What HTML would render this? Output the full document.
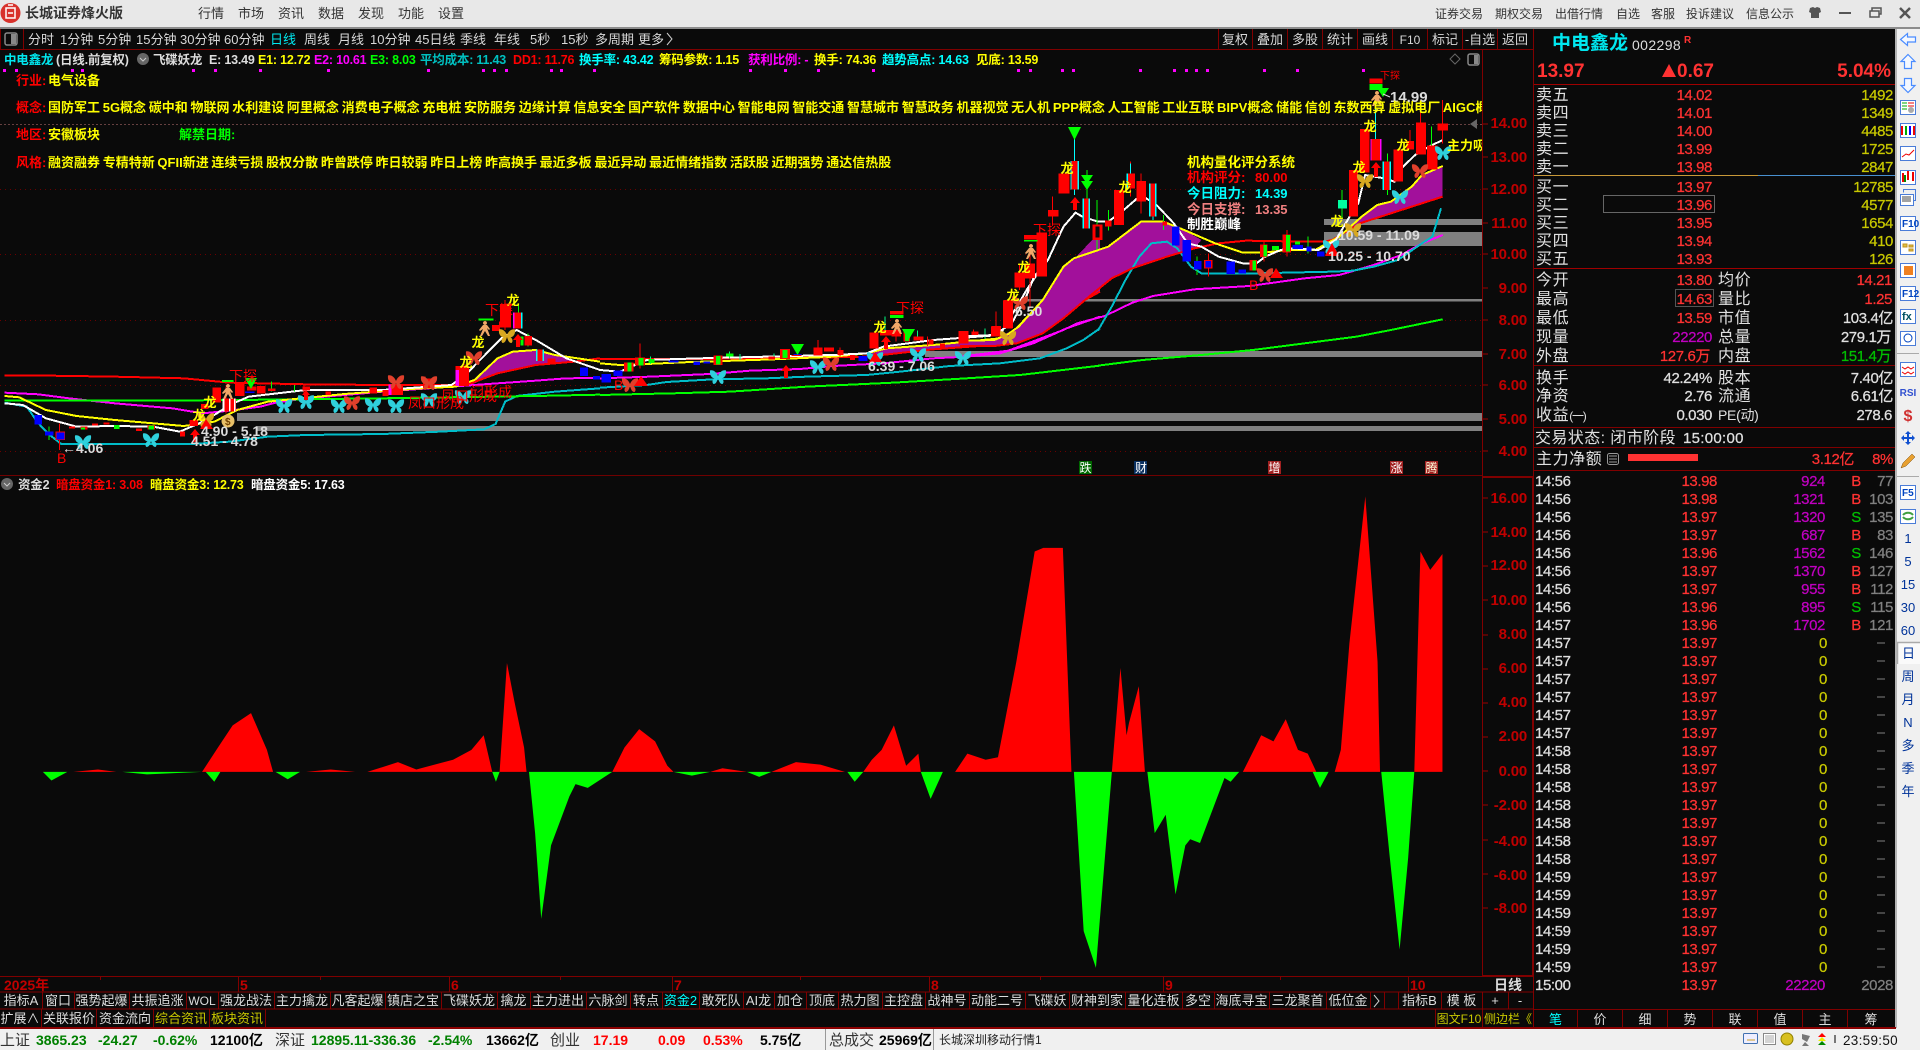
<!DOCTYPE html>
<html lang="zh"><head><meta charset="utf-8"><title>长城证券烽火版</title>
<style>
html,body{margin:0;padding:0;background:#0a0a0a;width:1920px;height:1050px;overflow:hidden}
svg{display:block}
text{font-family:"Liberation Sans","WenQuanYi Zen Hei","Noto Sans CJK SC",sans-serif;white-space:pre}
.e{text-anchor:end}.c{text-anchor:middle}
.n{font-size:15px;letter-spacing:-.4px;stroke-width:.25px}
.w{fill:#e0e0e0;stroke:#e0e0e0}.r{fill:#ff3232;stroke:#ff3232}.y{fill:#c8c800;stroke:#c8c800}.m{fill:#c000c0;stroke:#c000c0}.g{fill:#808080;stroke:#808080}.s{fill:#00c000;stroke:#00c000}
.l{font-size:16px;fill:#e0e0e0;letter-spacing:.6px}
.t{font-size:12px;fill:#333}
.b{font-size:13px;fill:#d8d8d8}
.k{font-size:13px;fill:#ddd}
.i{font-size:12.500px;font-weight:bold;letter-spacing:-.2px}
.a{font-size:15px;font-weight:bold;fill:#c00000;text-anchor:end;letter-spacing:-.2px}
.c1{font-size:13px;font-weight:bold;fill:#ff0;word-spacing:-.9px}
.c2{font-size:13px;font-weight:bold;fill:#f00}
.d{font-size:14px;font-weight:bold;fill:#dcdcdc}
.lg{font-size:13px;font-weight:bold;fill:#ff0;text-anchor:middle}
.tx{font-size:14px;fill:#f00;}
.st{font-size:14px;font-weight:bold}
.sb{font-size:13px;fill:#003399;text-anchor:middle}
.v{vector-effect:non-scaling-stroke;fill:none}
</style></head><body>
<svg width="1920" height="1050" viewBox="0 0 1920 1050" xmlns="http://www.w3.org/2000/svg">
<defs>
<symbol id="bf" viewBox="0 0 16 14" overflow="visible"><path d="M8 6C6.500 2 3 -.5 0 .5c-.5 4 1 7 4.500 8C2 9.500 2 13 3.500 14c2.500 0 3.500-2.500 4.500-6 1 3.500 2 6 4.500 6 1.500-1 1.500-4.500-1-5.500C15 7.500 16.500 4.500 16 .5 13-.5 9.500 2 8 6z"/></symbol>
<symbol id="pr" viewBox="0 0 14 16" overflow="visible"><path d="M7 0a2 2 0 1 1-.01 0zM5 4h4l3 4-1 1-2-2 3 8h-2l-3-5-3 5H2l3-7-3 2-1-1z" fill="#f0a868"/></symbol>
<clipPath id="cm"><rect x="0" y="50" width="1482" height="426"/></clipPath>
</defs>

<!-- backgrounds -->
<rect width="1920" height="1050" fill="#0a0a0a"/>
<rect width="1920" height="28" fill="#e8e8e8"/>
<rect y="27" width="1920" height="2" fill="#8c8c8c"/>
<rect x="1895" y="29" width="25" height="1000" fill="#f0f0f0"/>
<rect x="1895" y="29" width="2" height="1000" fill="#b4b4b4"/>
<rect y="1028" width="1920" height="22" fill="#f0f0f0"/>
<rect y="1027" width="1896" height="2" fill="#8a0000"/>

<!-- title bar -->
<circle cx="10.500" cy="13" r="10" fill="#d8322c"/><rect x="6" y="8" width="9" height="10" fill="none" stroke="#fff" stroke-width="1.500"/><path d="M8 5h5M8 13h5" stroke="#fff" stroke-width="1.500"/>
<text x="25" y="18" font-size="14" font-weight="bold" fill="#333">长城证券烽火版</text>
<g class="b">
<text class="b" x="198" y="18" style="fill:#333">行情</text><text class="b" x="238" y="18" style="fill:#333">市场</text><text class="b" x="278" y="18" style="fill:#333">资讯</text><text class="b" x="318" y="18" style="fill:#333">数据</text><text class="b" x="358" y="18" style="fill:#333">发现</text><text class="b" x="398" y="18" style="fill:#333">功能</text><text class="b" x="438" y="18" style="fill:#333">设置</text>
</g>
<text class="t" x="1435" y="18">证券交易</text><text class="t" x="1495" y="18">期权交易</text><text class="t" x="1555" y="18">出借行情</text><text class="t" x="1616" y="18">自选</text><text class="t" x="1651" y="18">客服</text><text class="t" x="1686" y="18">投诉建议</text><text class="t" x="1746" y="18">信息公示</text>
<path d="M1810 8l3-1 2 1 2-1 3 1 1 4-2 1v5h-8v-5l-2-1z" fill="#555"/>
<rect x="1839" y="12" width="12" height="2" fill="#555"/>
<path d="M1870 11h9v6h-9zM1872 11V8h9v6h-2" fill="none" stroke="#555" stroke-width="1.500"/>
<path d="M1900 8l10 10M1910 8l-10 10" stroke="#555" stroke-width="2.500"/>

<!-- period toolbar -->
<rect x="0" y="49" width="1533" height="1" fill="#800000"/>
<path d="M.5 29v20M23.500 29v20" stroke="#800000"/>
<rect x="5" y="33" width="12" height="12" rx="2" fill="none" stroke="#888" stroke-width="1.500"/><rect x="11" y="34" width="5" height="10" fill="#888"/>
<g class="b">
<text class="b" x="28" y="44">分时</text><text class="b" x="60" y="44">1分钟</text><text class="b" x="98" y="44">5分钟</text><text class="b" x="136" y="44">15分钟</text><text class="b" x="180" y="44">30分钟</text><text class="b" x="224" y="44">60分钟</text><text class="b" x="270" y="44" style="fill:#00e8f0">日线</text><text class="b" x="304" y="44">周线</text><text class="b" x="338" y="44">月线</text><text class="b" x="370" y="44">10分钟</text><text class="b" x="415" y="44">45日线</text><text class="b" x="460" y="44">季线</text><text class="b" x="494" y="44">年线</text><text class="b" x="530" y="44">5秒</text><text class="b" x="561" y="44">15秒</text><text class="b" x="595" y="44">多周期</text><text class="b" x="638" y="44">更多</text>
</g>
<path d="M667 33l5 6-5 6" fill="none" stroke="#ccc"/>
<path d="M1218.500 29v20M1252.500 29v20M1287.500 29v20M1322.500 29v20M1357.500 29v20M1392.500 29v20M1427.500 29v20M1462.500 29v20M1497.500 29v20" stroke="#800000"/>
<g><text class="b c" x="1235" y="44">复权</text><text class="b c" x="1270" y="44">叠加</text><text class="b c" x="1305" y="44">多股</text><text class="b c" x="1340" y="44">统计</text><text class="b c" x="1375" y="44">画线</text><text class="b c" x="1410" y="44" style="font-size:12px">F10</text><text class="b c" x="1445" y="44">标记</text><text class="b c" x="1480" y="44">-自选</text><text class="b c" x="1515" y="44">返回</text></g>

<!-- info line -->
<g class="i">
<text class="i" x="4" y="64" style="fill:#00e8f0">中电鑫龙</text><text class="i" x="56" y="64" style="fill:#ddd">(日线.前复权)</text>
<circle cx="143" cy="59" r="6" fill="#666"/><path d="M140 58l3 3 3-3" stroke="#ccc" fill="none"/>
<text class="i" x="153" y="64" style="fill:#ddd">飞碟妖龙</text>
<text class="i" x="209" y="64" style="fill:#ddd">E: 13.49</text>
<text class="i" x="258" y="64" style="fill:#ff0">E1: 12.72</text>
<text class="i" x="314" y="64" style="fill:#f0f">E2: 10.61</text>
<text class="i" x="370" y="64" style="fill:#0f0">E3: 8.03</text>
<text class="i" x="420" y="64" style="fill:#00c0c0">平均成本: 11.43</text>
<text class="i" x="513" y="64" style="fill:#f00">DD1: 11.76</text>
<text class="i" x="579" y="64" style="fill:#0ff">换手率: 43.42</text>
<text class="i" x="659" y="64" style="fill:#ff0">筹码参数: 1.15</text>
<text class="i" x="748" y="64" style="fill:#f0f">获利比例: -</text>
<text class="i" x="814" y="64" style="fill:#ff0">换手: 74.36</text>
<text class="i" x="882" y="64" style="fill:#0ff">趋势高点: 14.63</text>
<text class="i" x="976" y="64" style="fill:#ff0">见底: 13.59</text>
</g>
<path d="M1455 54l5 5-5 5-5-5z" fill="none" stroke="#666"/>
<rect x="1468" y="54" width="11" height="11" rx="2" fill="none" stroke="#888" stroke-width="1.500"/><rect x="1474" y="55" width="4" height="9" fill="#888"/>
<path fill="#f0f" d="M3 69h3v3H3zM15 69h3v3h-3zM71 69h3v3h-3zM81 69h3v3h-3zM192 69h3v3h-3zM214 69h3v3h-3zM259 69h3v3h-3zM327 69h3v3h-3zM427 69h3v3h-3zM482 69h3v3h-3zM493 69h3v3h-3zM505 69h3v3h-3zM550 69h3v3h-3zM560 69h3v3h-3zM593 69h3v3h-3zM749 69h3v3h-3zM784 69h3v3h-3zM817 69h3v3h-3zM872 69h3v3h-3zM1017 69h3v3h-3zM1029 69h3v3h-3zM1061 69h3v3h-3zM1072 69h3v3h-3zM1139 69h3v3h-3zM1173 69h3v3h-3zM1185 69h3v3h-3zM1195 69h3v3h-3zM1206 69h3v3h-3zM1263 69h3v3h-3zM1296 69h3v3h-3zM1362 69h3v3h-3z"/>

<!-- main chart -->
<g clip-path="url(#cm)" shape-rendering="crispEdges">
<path d="M0 189.500H1482M0 254.500H1482M0 320.500H1482M0 385.500H1482M0 451.500H1482" stroke="#6a0000" stroke-dasharray="1 4"/>
<path d="M0 124.500H1482" stroke="#664040" stroke-dasharray="2 2"/>
<!-- gray bands -->
<g fill="#808080">
<rect x="1324" y="219" width="158" height="6"/><rect x="1324" y="232" width="158" height="14"/>
<rect x="1022" y="299" width="460" height="2.500"/><rect x="925" y="351" width="557" height="6"/>
<rect x="237" y="413" width="1245" height="8"/><rect x="256" y="426" width="1226" height="5"/>
</g>
</g>

<g clip-path="url(#cm)" shape-rendering="crispEdges">
<!-- z9 group: left -->
<g transform="translate(0,290) scale(.3827,.3333)">
<path fill="#a2109b" d="M1230 285L1300 205 1340 185 1400 180 1450 195 1500 210 1500 215 1400 225 1300 250z"/>
<polyline class="v" stroke="#f0f" stroke-width="2" points="12,308 100,313 180,325 300,340 450,355 530,370 600,362 680,350 720,338 800,325 1000,305 1180,290 1300,280 1400,272 1480,265 1568,264"/>
<polyline class="v" stroke="#00bcc8" stroke-width="2" points="12,338 70,350 100,400 130,435 160,462 300,462 500,462 600,455 700,440 800,435 1000,432 1150,425 1265,418 1295,402 1320,335 1350,318 1450,305 1568,295"/>
<polyline class="v" stroke="#0f0" stroke-width="2" points="12,332 400,332 620,330 1000,325 1400,318 1568,314"/>
<polyline class="v" stroke="#f00" stroke-width="2" points="12,256 130,257 300,260 480,265 600,278 800,283 1000,285 1190,285 1230,280 1300,250 1400,225 1500,215 1568,205"/>
<polyline class="v" stroke="#ff0" stroke-width="2" points="12,318 50,322 120,360 200,378 300,390 400,400 480,408 560,395 620,360 700,335 900,312 1100,295 1190,290 1240,270 1300,205 1340,185 1400,180 1450,195 1568,215"/>
<polyline class="v" stroke="#fff" stroke-width="2" points="12,340 60,345 120,385 200,410 300,408 400,410 470,425 540,390 600,345 650,320 800,300 1000,300 1180,285 1220,250 1310,145 1350,120 1400,150 1480,205 1568,240"/>
<path class="v" stroke="#f00" d="M155 400V480M795 285V315M1305 95V130M1320 30V120M1110 260V300M1215 222V290M590 290V370"/>
<path class="v" stroke="#0f0" d="M128 410V450M1355 40V70M1380 130V170M710 275V305M770 285V305"/>
<path fill="#f00" d="M145 425h25v25h-25zM180 410h16v6h-16zM210 410h18v8h-18zM240 400h16v6h-16zM270 398h16v6h-16zM355 415h16v8h-16zM385 405h20v14h-20zM470 425h14v14h-14zM495 390h22v18h-22zM525 342h20v15h-20zM555 292h22v46h-22zM582 325h35v40h-35zM614 280h25v38h-25zM645 290h25v12h-25zM672 288h22v22h-22zM700 295h20v8h-20zM790 290h20v12h-20zM850 305h15v10h-15zM965 292h20v18h-20zM1000 300h15v18h-15zM1015 283h38v32h-38zM1105 265h30v30h-30zM1190 228h36v60h-36zM1285 105h20v18h-20zM1307 42h28v70h-28zM1340 68h25v48h-25zM1370 138h20v28h-20zM1400 178h22v35h-22zM1430 205h22v15h-22z"/>
<path fill="#00f" d="M90 375h20v28H90zM118 425h22v12h-22zM148 428h20v20h-20zM1515 233h22v25h-22zM1550 258h18v10h-18zM640 304h25v5h-25z"/>
<path fill="#0f0" d="M298 405h14v12h-14zM388 406h14v12h-14zM580 270h30v6h-30zM1250 85h40v6h-40zM212 412h10v6h-10zM1360 140h8v26h-8z"/>
<path fill="#f0f" d="M1015 283h8v32h-8zM1190 240h10v48h-10zM1340 68h4v48h-4z"/>
<path fill="#fff" d="M582 325h4v40h-4zM598 325h4v40h-4zM612 325h4v40h-4z"/>
<path fill="#0ff" d="M1361 68h4v48h-4zM1400 178h4v35h-4zM1418 178h4v35h-4z"/>
</g>
<!-- z10 group: mid -->
<g transform="translate(600,260) scale(.3333,.3333)">
<path fill="#a2109b" d="M800 285L860 265 1000 255 1200 235 1240 215 1330 120 1420 0 1500 -85 1500 95 1400 150 1300 225 1250 250 1000 268 800 290z"/>
<polyline class="v" stroke="#f0f" stroke-width="2" points="0,355 150,350 330,342 450,332 600,327 700,318 850,310 1000,295 1100,290 1200,280 1300,250 1400,205 1500,170"/>
<polyline class="v" stroke="#00bcc8" stroke-width="2" points="0,383 140,375 200,366 340,358 500,355 620,350 800,345 900,335 1050,318 1200,310 1320,295 1400,265 1450,240 1500,205"/>
<polyline class="v" stroke="#0f0" stroke-width="2" points="0,405 220,400 390,395 620,380 880,368 1100,355 1260,345 1500,317"/>
<polyline class="v" stroke="#f00" stroke-width="2" points="0,297 300,297 700,292 800,290 1000,268 1250,250 1300,225 1400,150 1500,95"/>
<polyline class="v" stroke="#ff0" stroke-width="2" points="0,310 60,315 140,312 250,307 400,302 520,298 700,290 800,280 860,265 1000,255 1200,235 1240,215 1330,120 1420,0"/>
<polyline class="v" stroke="#fff" stroke-width="2" points="0,330 60,335 140,300 300,295 500,290 700,285 800,280 850,260 1000,240 1200,225 1280,90 1340,0"/>
<path class="v" stroke="#f00" d="M120 250V325M654 240V262M1188 155V198M1290 50V140M1120 208V230M888 230V245M720 262V290M982 230V258"/>
<path class="v" stroke="#00ff80" d="M152 290V312M420 282V300M388 275V295M1155 205V240M855 170V210M953 212V232M522 280V298"/>
<path fill="#f00" d="M72 307h28v28H72zM105 292h30v25h-30zM340 287h28v28h-28zM505 290h20v8h-20zM540 267h30v30h-30zM575 285h30v3h-30zM640 262h28v25h-28zM672 262h30v12h-30zM712 270h18v15h-18zM750 285h15v15h-15zM808 218h28v47h-28zM840 210h35v17h-35zM875 210h28v20h-28zM910 212h20v33h-20zM940 230h30v12h-30zM985 238h15v15h-15zM1020 250h15v15h-15zM1075 213h30v40h-30zM1115 215h20v12h-20zM1175 198h28v32h-28zM1210 120h28v85h-28zM1243 37h30v45h-30zM1275 10h30v45h-30zM1310 -20h30v70h-30zM870 153h40v11h-40z"/>
<path fill="#00f" d="M5 342h28v25H5zM40 332h28v16H40zM205 302h30v5h-30zM280 305h20v10h-20zM310 305h20v5h-20zM775 288h28v15h-28zM580 282h24v3h-24z"/>
<path fill="#0f0" d="M82 308h12v26H82zM115 294h15v22h-15zM145 297h18v12h-18zM348 288h14v26h-14zM378 280h22v10h-22zM548 270h14v24h-14zM870 165h40v9h-40zM915 215h12v28h-12z"/>
</g>
<!-- z8 group: right -->
<g transform="translate(960,60) scale(.3448,.3333)">
<path fill="#a2109b" d="M0 843L100 840 170 800 240 720 300 620 330 595 430 560 525 485 590 485 650 510 700 540 680 565 600 590 500 625 440 655 380 705 300 775 240 820 165 850 100 858 0 858z"/>
<path fill="#a2109b" d="M1100 530L1165 470 1210 435 1250 425 1310 380 1340 345 1400 318 1400 410 1250 460 1160 490z"/>
<polyline class="v" stroke="#f0f" stroke-width="2" points="0,890 80,880 140,872 210,845 300,810 340,790 420,768 500,728 560,708 680,688 840,678 1000,655 1100,645 1200,615 1280,585 1340,550 1400,525"/>
<polyline class="v" stroke="#00bcc8" stroke-width="2" points="400,812 440,740 480,660 520,590 555,550 600,545 630,565 670,620 700,640 860,640 1080,635 1140,632 1200,620 1270,600 1340,550 1370,530 1395,445"/>
<polyline class="v" stroke="#0f0" stroke-width="2" points="400,917 530,900 700,885 850,870 1000,850 1150,830 1250,810 1400,778"/>
<polyline class="v" stroke="#f00" stroke-width="2" points="0,858 100,858 165,850 240,820 300,775 380,705 440,655 500,625 600,590 680,565 750,550 830,542 1000,545 1057,545 1080,540 1160,490 1250,460 1400,410"/>
<polyline class="v" stroke="#ff0" stroke-width="2" points="0,843 100,840 140,822 170,800 240,720 300,620 330,595 430,560 525,485 590,485 650,510 740,550 820,578 880,578 950,570 1030,570 1100,530 1165,470 1210,435 1250,425 1310,380 1340,345 1400,318"/>
<polyline class="v" stroke="#fff" stroke-width="2" points="0,830 100,825 150,790 190,715 215,650 255,600 300,500 335,458 355,470 400,485 430,485 475,450 525,405 570,435 620,490 660,550 700,560 750,590 820,610 860,610 885,590 930,570 960,565 1040,570 1090,540 1130,470 1155,430 1175,345 1230,355 1260,365 1280,325 1320,285 1360,260 1400,240"/>
<path class="v" stroke="#f00" d="M104 755V830M172 610V690M203 575V715M268 410V495M525 340V460M494 305V410M1335 120V190M1400 120V250M1305 210V245M720 580V650M882 540V605M948 510V590"/>
<path class="v" stroke="#0f0" d="M398 420V570M430 450V512M368 330V415M1240 280V405M1010 530V580M590 465V510M688 590V645M1368 200V260M1108 390V475"/>
<path class="v" stroke="#0ff" d="M332 225V405M1205 110V240M494 310V340M560 470V480"/>
<path fill="#f00" d="M0 815h25v35H0zM90 800h28v30H90zM125 722h28v82h-28zM158 637h30v45h-30zM190 612h28v42h-28zM222 518h30v132h-30zM255 450h30v20h-30zM285 340h32v60h-32zM320 303h25v85h-25zM355 415h22v90h-22zM385 493h28v47h-28zM420 482h20v18h-20zM447 390h28v105h-28zM483 340h25v45h-25zM512 363h28v62h-28zM548 370h22v100h-22zM588 485h12v12h-12zM708 600h25v25h-25zM840 600h22v32h-22zM870 553h22v38h-22zM935 523h25v55h-25zM1128 330h27v140h-27zM1160 207h28v130h-28zM1190 237h32v65h-32zM1225 305h25v85h-25zM1257 268h28v97h-28zM1295 243h22v25h-22zM1322 187h30v97h-30zM1355 257h30v72h-30zM1385 190h30v22h-30zM1188 55h38v15h-38zM185 525h40v14h-40z"/>
<path fill="#0a0a0a" d="M393 500h12v32h-12z"/>
<path fill="#00f" d="M615 500h22v57h-22zM645 540h25v65h-25zM678 603h22v25h-22zM773 605h25v37h-25zM808 628h22v12h-22zM965 555h15v12h-15zM980 555h15v12h-15zM1005 560h15v15h-15zM1035 575h22v15h-22zM712 603h16v20h-16z"/>
<path fill="#0f0" d="M880 555h10v35h-10zM945 525h12v50h-12zM848 602h10v30h-10zM905 558h20v12h-20zM1188 72h38v18h-38zM972 544h14v10h-14zM185 540h40v5h-40z"/>
<path fill="#00ffa0" d="M1097 420h26v25h-26z"/>
<path fill="#0ff" d="M355 415h4v90h-4zM373 415h4v90h-4zM483 340h4v45h-4zM548 370h4v100h-4zM566 370h4v100h-4zM1225 305h4v85h-4zM1246 305h4v85h-4zM320 303h4v85h-4zM341 303h4v85h-4z"/>
<path fill="#f0f" d="M1190 237h4v65h-4zM1218 237h4v65h-4z"/>
</g>
</g>

<!-- chart symbols -->
<g clip-path="url(#cm)">
<g fill="#2fd0dc"><use href="#bf" x="75" y="435" width="16" height="14"/><use href="#bf" x="143" y="433" width="16" height="14"/><use href="#bf" x="276" y="399" width="16" height="14"/><use href="#bf" x="298" y="395" width="16" height="14"/><use href="#bf" x="331" y="399" width="16" height="14"/><use href="#bf" x="365" y="398" width="16" height="14"/><use href="#bf" x="388" y="399" width="16" height="14"/><use href="#bf" x="421" y="393" width="16" height="14"/><use href="#bf" x="455" y="390" width="16" height="14"/><use href="#bf" x="710" y="370" width="16" height="14"/><use href="#bf" x="810" y="360" width="16" height="14"/><use href="#bf" x="867" y="352" width="16" height="14"/><use href="#bf" x="910" y="348" width="16" height="14"/><use href="#bf" x="955" y="351" width="16" height="14"/><use href="#bf" x="1392" y="190" width="16" height="14"/><use href="#bf" x="1435" y="146" width="16" height="14"/><use href="#bf" x="1323" y="240" width="16" height="14"/></g>
<g fill="#e0402c"><use href="#bf" x="388" y="375" width="16" height="14"/><use href="#bf" x="466" y="351" width="16" height="14"/><use href="#bf" x="421" y="376" width="16" height="14"/><use href="#bf" x="344" y="396" width="16" height="14"/><use href="#bf" x="622" y="378" width="16" height="14"/><use href="#bf" x="823" y="357" width="16" height="14"/><use href="#bf" x="1012" y="296" width="16" height="14"/><use href="#bf" x="1257" y="268" width="16" height="14"/><use href="#bf" x="1412" y="164" width="16" height="14"/></g>
<g fill="#d8a820"><use href="#bf" x="198" y="413" width="16" height="14"/><use href="#bf" x="499" y="329" width="16" height="14"/><use href="#bf" x="1000" y="331" width="16" height="14"/><use href="#bf" x="1345" y="223" width="16" height="14"/><use href="#bf" x="1357" y="174" width="16" height="14"/></g>
<use href="#pr" x="1370" y="91" width="14" height="16"/><use href="#pr" x="1024" y="244" width="14" height="16"/><use href="#pr" x="890" y="319" width="14" height="16"/><use href="#pr" x="221" y="384" width="14" height="16"/><use href="#pr" x="478" y="321" width="14" height="16"/>
<!-- green triangles -->
<path fill="#0f0" d="M1068 127h13l-6.500 13zM791 344h13l-6.500 11zM902 329h13l-6.500 11zM245 378h12l-6 11zM1081 175h12l-6 9zM1081 181h12l-6 9zM1377 88h12l-6 9"/>
<!-- red triangles/arrows -->
<path fill="#f00" d="M1325 256l7-13 7 13zM1270 278l6-10 7 10zM634 386l7-10 7 10zM200 429l6-10 7 10zM869 362l6-10 7 10z"/>
<path fill="#f00" d="M1075 197l5 6h-3v7h-4v-7h-3zM1376 162l5 6h-3v9h-4v-9h-3zM195 429l5 6h-3v7h-4v-7h-3zM518 334l5 6h-3v7h-4v-7h-3zM786 365l5 6h-3v7h-4v-7h-3zM886 336l5 6h-3v7h-4v-7h-3zM306 390l4 5h-2v5h-4v-5h-2z"/>
<circle cx="228" cy="421" r="6.500" fill="#e8c068"/><text x="225" y="425" font-size="10" font-weight="bold" fill="#704000">$</text>
<!-- 龙 -->
<text class="lg" x="1370" y="131">龙</text><text class="lg" x="1359" y="172">龙</text><text class="lg" x="1403" y="150">龙</text><text class="lg" x="1337" y="226">龙</text><text class="lg" x="1067" y="173">龙</text><text class="lg" x="1125" y="192">龙</text><text class="lg" x="1013" y="300">龙</text><text class="lg" x="1024" y="272">龙</text><text class="lg" x="880" y="332">龙</text><text class="lg" x="513" y="305">龙</text><text class="lg" x="478" y="347">龙</text><text class="lg" x="466" y="367">龙</text><text class="lg" x="210" y="407">龙</text><text class="lg" x="199" y="420">龙</text>
<!-- red words -->
<text class="tx" x="896" y="313">下探</text><text class="tx" x="229" y="381">下探</text><text class="tx" x="485" y="315">下探</text><text class="tx" x="1033" y="235">下探</text><text class="tx" x="1380" y="79" style="font-size:10px">下探</text>
<text class="tx" x="408" y="408">凤口形成</text><text class="tx" x="441" y="401">凤口形成</text><text class="tx" x="470" y="397">门形成</text>
<text x="57" y="463" font-size="14" fill="#f00">B</text><text x="614" y="390" font-size="14" fill="#f00">B</text><text x="1249" y="290" font-size="14" fill="#f00">B</text>
<!-- price labels -->
<text class="d" x="1390" y="102" style="font-size:15px">14.99</text><path d="M1383 94l7 3" stroke="#ddd"/>
<text class="d" x="1338" y="240">10.59 - 11.09</text>
<text class="d" x="1328" y="261">10.25 - 10.70</text>
<text class="d" x="1015" y="316">6.50</text>
<text class="d" x="868" y="371">6.39 - 7.06</text>
<text class="d" x="201" y="436">4.90 - 5.18</text>
<text class="d" x="191" y="446">4.51 - 4.78</text>
<text class="d" x="62" y="453">←4.06</text>
<!-- score system -->
<text class="c1" x="1187" y="167" style="font-size:13.500px">机构量化评分系统</text>
<text x="1187" y="182" font-size="13.500" font-weight="bold" fill="#f00">机构评分:</text><text x="1255" y="182" font-size="13" font-weight="bold" fill="#f00">80.00</text>
<text x="1187" y="198" font-size="13.500" fill="#0ff" font-weight="bold">今日阻力:</text><text x="1255" y="198" font-size="13" font-weight="bold" fill="#0ff">14.39</text>
<text x="1187" y="214" font-size="13.500" fill="#f08080" font-weight="bold">今日支撑:</text><text x="1255" y="214" font-size="13" font-weight="bold" fill="#f08080">13.35</text>
<text x="1187" y="229" font-size="13.500" fill="#fff" font-weight="bold">制胜巅峰</text>
<text class="c1" x="1447" y="150">主力吸筹</text>
<!-- concept rows -->
<text class="c2" x="16" y="85">行业:</text><text class="c1" x="48" y="85">电气设备</text>
<text class="c2" x="16" y="112">概念:</text><text class="c1" x="48" y="112">国防军工 5G概念 碳中和 物联网 水利建设 阿里概念 消费电子概念 充电桩 安防服务 边缘计算 信息安全 国产软件 数据中心 智能电网 智能交通 智慧城市 智慧政务 机器视觉 无人机 PPP概念 人工智能 工业互联 BIPV概念 储能 信创 东数西算 虚拟电厂 AIGC概念</text>
<text class="c2" x="16" y="139">地区:</text><text class="c1" x="48" y="139">安徽板块</text><text x="179" y="139" font-size="13" font-weight="bold" fill="#0f0">解禁日期:</text>
<text class="c2" x="16" y="167">风格:</text><text class="c1" x="48" y="167">融资融券 专精特新 QFII新进 连续亏损 股权分散 昨曾跌停 昨日较弱 昨日上榜 昨高换手 最近多板 最近异动 最近情绪指数 活跃股 近期强势 通达信热股</text>
</g>

<!-- event tags -->
<rect x="1079" y="461" width="13" height="13" fill="#006800"/><text class="c" x="1085.500" y="472" font-size="12" fill="#fff">跌</text>
<rect x="1134" y="461" width="13" height="13" fill="#0a3060"/><text class="c" x="1141" y="472" font-size="12" fill="#fff">财</text>
<rect x="1268" y="461" width="13" height="13" fill="#a02020"/><text class="c" x="1274.500" y="472" font-size="12" fill="#fff">增</text>
<rect x="1390" y="461" width="13" height="13" fill="#a02020"/><text class="c" x="1396.500" y="472" font-size="12" fill="#fff">涨</text>
<rect x="1425" y="461" width="13" height="13" fill="#a02020"/><text class="c" x="1431.500" y="472" font-size="12" fill="#ffd">腾</text>

<!-- frame lines chart -->
<rect x="0" y="475" width="1482" height="1" fill="#700000"/>
<rect x="1482" y="50" width="1" height="926" fill="#800000"/>
<path d="M1470 124l7-5v10z" fill="#666"/>
<path d="M1483 124h5M1483 157h5M1483 189h5M1483 223h5M1483 254h5M1483 288h5M1483 320h5M1483 354h5M1483 385h5M1483 419h5M1483 451h5" stroke="#900"/>
<text class="a" x="1527" y="128">14.00</text><text class="a" x="1527" y="162">13.00</text><text class="a" x="1527" y="194">12.00</text><text class="a" x="1527" y="228">11.00</text><text class="a" x="1527" y="259">10.00</text><text class="a" x="1527" y="293">9.00</text><text class="a" x="1527" y="325">8.00</text><text class="a" x="1527" y="359">7.00</text><text class="a" x="1527" y="390">6.00</text><text class="a" x="1527" y="424">5.00</text><text class="a" x="1527" y="456">4.00</text>

<!-- sub panel -->
<circle cx="7" cy="484" r="6" fill="#666"/><path d="M4 483l3 3 3-3" stroke="#ccc" fill="none"/>
<text class="i" x="18" y="489" style="fill:#ddd">资金2</text>
<text class="i" x="56" y="489" style="fill:#f00">暗盘资金1: 3.08</text>
<text class="i" x="150" y="489" style="fill:#ff0">暗盘资金3: 12.73</text>
<text class="i" x="251" y="489" style="fill:#fff">暗盘资金5: 17.63</text>
<g transform="translate(0,.5) scale(1.2245)">
<path fill="#f00" d="M60 630L80 628 95 630zM165 630L178 610 190 592 205 582 218 612 223 630zM250 630L270 628 290 630zM300 630L325 622 340 628 370 620 385 612 395 600 402 630zM408 630L414 541 420 572 428 610 430 630zM500 630L510 610 522 595 535 605 545 625 550 630zM580 630L590 627 610 630zM630 630L650 622 670 624 690 630zM705 630L712 620 720 612 730 592 740 625 750 615 752 630zM780 630L790 615 805 620 815 618 830 540 845 450 852 447 868 447 875 630zM908 630L915 545 920 600 922 590 930 560 935 630zM1015 630L1030 600 1040 605 1050 587 1060 612 1068 615 1075 630zM1090 630L1095 612 1102 525 1115 405 1125 540 1127 630zM1155 630L1160 450 1168 465 1178 452 1178 630z"/>
<path fill="#0f0" d="M3 630L35 630 42 637 55 630zM100 630L120 632 165 630zM168 630L175 638 180 630zM225 630L235 636 245 630zM402 630L405 638 408 630zM432 630L437 680 442 750 450 690 465 650 470 640 480 643 500 630zM550 630L565 633 580 630zM610 630L620 634 630 630zM692 630L698 638 705 630zM752 630L760 652 770 630zM877 630L885 760 895 790 908 630zM937 630L943 680 952 665 960 730 968 690 972 685 980 688 1000 635 1005 638 1012 630zM1072 630L1078 643 1085 630zM1128 630L1135 700 1143 775 1150 700 1155 630z"/>
</g>
<!-- sub axis -->
<path d="M1482 477h51V976h-51" fill="none" stroke="#800000" stroke-width="2"/>
<path d="M1483 498h5M1483 532h5M1483 566h5M1483 600h5M1483 635h5M1483 669h5M1483 703h5M1483 737h5M1483 771h5M1483 805h5M1483 840h5M1483 874h5M1483 908h5" stroke="#900"/>
<text class="a" x="1527" y="503">16.00</text><text class="a" x="1527" y="537">14.00</text><text class="a" x="1527" y="570">12.00</text><text class="a" x="1527" y="605">10.00</text><text class="a" x="1527" y="639">8.00</text><text class="a" x="1527" y="673">6.00</text><text class="a" x="1527" y="707">4.00</text><text class="a" x="1527" y="741">2.00</text><text class="a" x="1527" y="776">0.00</text><text class="a" x="1527" y="810">-2.00</text><text class="a" x="1527" y="846">-4.00</text><text class="a" x="1527" y="880">-6.00</text><text class="a" x="1527" y="913">-8.00</text>

<!-- date row -->
<rect x="0" y="976" width="1482" height="1" fill="#800000"/><rect x="0" y="991.500" width="1533" height="1" fill="#800000"/>
<path d="M238.500 977v15M449.500 977v15M672.500 977v15M929.500 977v15M1163.500 977v15M1408.500 977v15M100.500 977v3M320.500 977v3M560.500 977v3M800.500 977v3M1040.500 977v3M1280.500 977v3" stroke="#800000"/>
<g><text x="4" y="990" font-size="14" font-weight="bold" fill="#c00000">2025年</text><text x="240" y="990" font-size="14" font-weight="bold" fill="#c00000">5</text><text x="451" y="990" font-size="14" font-weight="bold" fill="#c00000">6</text><text x="674" y="990" font-size="14" font-weight="bold" fill="#c00000">7</text><text x="931" y="990" font-size="14" font-weight="bold" fill="#c00000">8</text><text x="1165" y="990" font-size="14" font-weight="bold" fill="#c00000">9</text><text x="1410" y="990" font-size="14" font-weight="bold" fill="#c00000">10</text></g>
<text x="1494" y="990" font-size="14" font-weight="bold" fill="#ddd">日线</text>

<!-- tabs row 1 -->
<rect x="0" y="1008.500" width="1533" height="1" fill="#800000"/>
<path d="M42.500 992v17M74.500 992v17M129.500 992v17M186.500 992v17M218.500 992v17M274.500 992v17M330.500 992v17M385.500 992v17M441.500 992v17M497.500 992v17M530.500 992v17M586.500 992v17M630.500 992v17M662.500 992v17M699.500 992v17M743.500 992v17M774.500 992v17M806.500 992v17M838.500 992v17M882.500 992v17M925.500 992v17M969.500 992v17M1025.500 992v17M1069.500 992v17M1125.500 992v17M1182.500 992v17M1214.500 992v17M1269.500 992v17M1326.500 992v17M1370.500 992v17M1384.500 992v17M1398.500 992v17M1441.500 992v17M1482.500 992v17M1508.500 992v17" stroke="#800000"/>
<g>
<text class="k c" x="21" y="1005">指标A</text><text class="k c" x="58" y="1005">窗口</text><text class="k c" x="101.500" y="1005">强势起爆</text><text class="k c" x="157.500" y="1005">共振追涨</text><text class="k c" x="202" y="1005" style="font-size:12px">WOL</text><text class="k c" x="246" y="1005">强龙战法</text><text class="k c" x="302" y="1005">主力擒龙</text><text class="k c" x="357.500" y="1005">凡客起爆</text><text class="k c" x="413" y="1005">镇店之宝</text><text class="k c" x="469" y="1005">飞碟妖龙</text><text class="k c" x="513.500" y="1005">擒龙</text><text class="k c" x="558" y="1005">主力进出</text><text class="k c" x="608" y="1005">六脉剑</text><text class="k c" x="646" y="1005">转点</text><text class="k c" x="680.500" y="1005" style="fill:#0ff">资金2</text><text class="k c" x="721" y="1005">敢死队</text><text class="k c" x="758.500" y="1005">AI龙</text><text class="k c" x="790" y="1005">加仓</text><text class="k c" x="822" y="1005">顶底</text><text class="k c" x="860" y="1005">热力图</text><text class="k c" x="903.500" y="1005">主控盘</text><text class="k c" x="947" y="1005">战神号</text><text class="k c" x="997" y="1005">动能二号</text><text class="k c" x="1047" y="1005">飞碟妖</text><text class="k c" x="1097" y="1005">财神到家</text><text class="k c" x="1153.500" y="1005">量化连板</text><text class="k c" x="1198" y="1005">多空</text><text class="k c" x="1241.500" y="1005">海底寻宝</text><text class="k c" x="1297.500" y="1005">三龙聚首</text><text class="k c" x="1348" y="1005">低位金</text><text class="k c" x="1419.500" y="1005">指标B</text><text class="k c" x="1461.500" y="1005">模 板</text><text class="k c" x="1495" y="1005">+</text><text class="k c" x="1520" y="1005">-</text>
</g>
<path d="M1374 995l5 6-5 6" fill="none" stroke="#ccc"/>

<!-- tabs row 2 -->
<path d="M41.500 1009v18M96.500 1009v18M153.500 1009v18M209.500 1009v18M265.500 1009v18M1435.500 1009v18M1482.500 1009v18" stroke="#800000"/>
<text class="k c" x="20" y="1023">扩展∧</text><text class="k c" x="69" y="1023">关联报价</text><text class="k c" x="125" y="1023">资金流向</text><text class="k c" x="181" y="1023" style="fill:#c8c800">综合资讯</text><text class="k c" x="237" y="1023" style="fill:#c8c800">板块资讯</text>
<text class="k c" x="1459" y="1023" style="fill:#c8c800;font-size:12px">图文F10</text><text class="k c" x="1508" y="1023" style="fill:#c8c800;font-size:12px">侧边栏《</text>

<!-- right panel -->
<rect x="1533" y="29" width="1" height="999" fill="#800000"/>
<rect x="1497" y="49" width="36" height="1" fill="#800000"/>
<text x="1552" y="49" font-size="19" font-weight="bold" fill="#00e8f0">中电鑫龙</text>
<text x="1632" y="50" font-size="14" fill="#ddd" letter-spacing=".4">002298</text>
<text x="1684" y="43" font-size="10" font-weight="bold" fill="#ff3232">R</text>
<text x="1537" y="77" font-size="19" font-weight="bold" fill="#ff3232">13.97</text>
<path d="M1662 77l7-13 7 13z" fill="#ff3232"/>
<text x="1677" y="77" font-size="19" font-weight="bold" fill="#ff3232">0.67</text>
<text x="1891" y="77" font-size="19" font-weight="bold" fill="#ff3232" text-anchor="end">5.04%</text>
<rect x="1534" y="84" width="361" height="1" fill="#a00000"/>
<rect x="1534" y="175" width="224" height="1" fill="#c89838"/><rect x="1758" y="175" width="137" height="1" fill="#4890d0"/>
<rect x="1534" y="268" width="361" height="1" fill="#a00000"/>
<rect x="1534" y="365" width="361" height="1" fill="#800000"/>
<rect x="1534" y="427" width="361" height="1" fill="#800000"/>
<rect x="1534" y="447" width="361" height="1" fill="#800000"/>
<rect x="1534" y="470" width="361" height="1" fill="#800000"/>

<g>
<text class="l" x="1536" y="100">卖五</text><text class="n r e" x="1712" y="100">14.02</text><text class="n y e" x="1893" y="100">1492</text>
<text class="l" x="1536" y="118">卖四</text><text class="n r e" x="1712" y="118">14.01</text><text class="n y e" x="1893" y="118">1349</text>
<text class="l" x="1536" y="136">卖三</text><text class="n r e" x="1712" y="136">14.00</text><text class="n y e" x="1893" y="136">4485</text>
<text class="l" x="1536" y="154">卖二</text><text class="n r e" x="1712" y="154">13.99</text><text class="n y e" x="1893" y="154">1725</text>
<text class="l" x="1536" y="172">卖一</text><text class="n r e" x="1712" y="172">13.98</text><text class="n y e" x="1893" y="172">2847</text>
<text class="l" x="1536" y="192">买一</text><text class="n r e" x="1712" y="192">13.97</text><text class="n y e" x="1893" y="192">12785</text>
<text class="l" x="1536" y="210">买二</text><text class="n r e" x="1712" y="210">13.96</text><text class="n y e" x="1893" y="210">4577</text>
<text class="l" x="1536" y="228">买三</text><text class="n r e" x="1712" y="228">13.95</text><text class="n y e" x="1893" y="228">1654</text>
<text class="l" x="1536" y="246">买四</text><text class="n r e" x="1712" y="246">13.94</text><text class="n y e" x="1893" y="246">410</text>
<text class="l" x="1536" y="264">买五</text><text class="n r e" x="1712" y="264">13.93</text><text class="n y e" x="1893" y="264">126</text>
</g>
<rect x="1603.500" y="195.500" width="111" height="17" fill="none" stroke="#666"/>
<rect x="1675.500" y="289.500" width="38" height="17" fill="none" stroke="#555"/>
<g>
<text class="l" x="1536" y="285">今开</text><text class="n r e" x="1712" y="285">13.80</text><text class="l" x="1718" y="285">均价</text><text class="n r e" x="1892" y="285">14.21</text>
<text class="l" x="1536" y="304">最高</text><text class="n r e" x="1712" y="304">14.63</text><text class="l" x="1718" y="304">量比</text><text class="n r e" x="1892" y="304">1.25</text>
<text class="l" x="1536" y="323">最低</text><text class="n r e" x="1712" y="323">13.59</text><text class="l" x="1718" y="323">市值</text><text class="n w e" x="1893" y="323">103.4亿</text>
<text class="l" x="1536" y="342">现量</text><text class="n m e" x="1712" y="342">22220</text><text class="l" x="1718" y="342">总量</text><text class="n w e" x="1891" y="342">279.1万</text>
<text class="l" x="1536" y="361">外盘</text><text class="n r e" x="1710" y="361">127.6万</text><text class="l" x="1718" y="361">内盘</text><text class="n s e" x="1891" y="361">151.4万</text>
<text class="l" x="1536" y="383">换手</text><text class="n w e" x="1712" y="383">42.24%</text><text class="l" x="1718" y="383">股本</text><text class="n w e" x="1893" y="383">7.40亿</text>
<text class="l" x="1536" y="401">净资</text><text class="n w e" x="1712" y="401">2.76</text><text class="l" x="1718" y="401">流通</text><text class="n w e" x="1893" y="401">6.61亿</text>
<text class="l" x="1536" y="420">收益<tspan style="font-size:12px;letter-spacing:-1.200px">(一)</tspan></text><text class="n w e" x="1712" y="420">0.030</text><text class="l" x="1718" y="420" style="letter-spacing:-.3px;font-size:14px">PE(动)</text><text class="n w e" x="1892" y="420">278.6</text>
<text class="l" x="1535" y="443" style="letter-spacing:.4px">交易状态: 闭市阶段</text><text class="n w" x="1683" y="443" style="letter-spacing:.3px">15:00:00</text>
<text class="l" x="1536" y="464">主力净额</text>
</g>
<rect x="1607.500" y="453.500" width="11" height="11" rx="2" fill="none" stroke="#999"/><path d="M1609 456h8M1609 459h8M1609 462h8" stroke="#999"/>
<rect x="1628" y="454" width="70" height="7" fill="#ff3232"/>
<text class="n r e" x="1854" y="464">3.12亿</text><text class="n r e" x="1893" y="464">8%</text>

<!-- tick list -->
<g>
<g transform="translate(0,486)"><text class="n w" x="1535">14:56</text><text class="n r e" x="1717">13.98</text><text class="n m e" x="1825">924</text><text class="n r c" x="1856">B</text><text class="n g e" x="1893">77</text></g>
<g transform="translate(0,504)"><text class="n w" x="1535">14:56</text><text class="n r e" x="1717">13.98</text><text class="n m e" x="1825">1321</text><text class="n r c" x="1856">B</text><text class="n g e" x="1893">103</text></g>
<g transform="translate(0,522)"><text class="n w" x="1535">14:56</text><text class="n r e" x="1717">13.97</text><text class="n m e" x="1825">1320</text><text class="n s c" x="1856">S</text><text class="n g e" x="1893">135</text></g>
<g transform="translate(0,540)"><text class="n w" x="1535">14:56</text><text class="n r e" x="1717">13.97</text><text class="n m e" x="1825">687</text><text class="n r c" x="1856">B</text><text class="n g e" x="1893">83</text></g>
<g transform="translate(0,558)"><text class="n w" x="1535">14:56</text><text class="n r e" x="1717">13.96</text><text class="n m e" x="1825">1562</text><text class="n s c" x="1856">S</text><text class="n g e" x="1893">146</text></g>
<g transform="translate(0,576)"><text class="n w" x="1535">14:56</text><text class="n r e" x="1717">13.97</text><text class="n m e" x="1825">1370</text><text class="n r c" x="1856">B</text><text class="n g e" x="1893">127</text></g>
<g transform="translate(0,594)"><text class="n w" x="1535">14:56</text><text class="n r e" x="1717">13.97</text><text class="n m e" x="1825">955</text><text class="n r c" x="1856">B</text><text class="n g e" x="1893">112</text></g>
<g transform="translate(0,612)"><text class="n w" x="1535">14:56</text><text class="n r e" x="1717">13.96</text><text class="n m e" x="1825">895</text><text class="n s c" x="1856">S</text><text class="n g e" x="1893">115</text></g>
<g transform="translate(0,630)"><text class="n w" x="1535">14:57</text><text class="n r e" x="1717">13.96</text><text class="n m e" x="1825">1702</text><text class="n r c" x="1856">B</text><text class="n g e" x="1893">121</text></g>
<g transform="translate(0,648)"><text class="n w" x="1535">14:57</text><text class="n r e" x="1717">13.97</text><text class="n y e" x="1827">0</text><path d="M1877 -5h8" stroke="#808080"/></g>
<g transform="translate(0,666)"><text class="n w" x="1535">14:57</text><text class="n r e" x="1717">13.97</text><text class="n y e" x="1827">0</text><path d="M1877 -5h8" stroke="#808080"/></g>
<g transform="translate(0,684)"><text class="n w" x="1535">14:57</text><text class="n r e" x="1717">13.97</text><text class="n y e" x="1827">0</text><path d="M1877 -5h8" stroke="#808080"/></g>
<g transform="translate(0,702)"><text class="n w" x="1535">14:57</text><text class="n r e" x="1717">13.97</text><text class="n y e" x="1827">0</text><path d="M1877 -5h8" stroke="#808080"/></g>
<g transform="translate(0,720)"><text class="n w" x="1535">14:57</text><text class="n r e" x="1717">13.97</text><text class="n y e" x="1827">0</text><path d="M1877 -5h8" stroke="#808080"/></g>
<g transform="translate(0,738)"><text class="n w" x="1535">14:57</text><text class="n r e" x="1717">13.97</text><text class="n y e" x="1827">0</text><path d="M1877 -5h8" stroke="#808080"/></g>
<g transform="translate(0,756)"><text class="n w" x="1535">14:58</text><text class="n r e" x="1717">13.97</text><text class="n y e" x="1827">0</text><path d="M1877 -5h8" stroke="#808080"/></g>
<g transform="translate(0,774)"><text class="n w" x="1535">14:58</text><text class="n r e" x="1717">13.97</text><text class="n y e" x="1827">0</text><path d="M1877 -5h8" stroke="#808080"/></g>
<g transform="translate(0,792)"><text class="n w" x="1535">14:58</text><text class="n r e" x="1717">13.97</text><text class="n y e" x="1827">0</text><path d="M1877 -5h8" stroke="#808080"/></g>
<g transform="translate(0,810)"><text class="n w" x="1535">14:58</text><text class="n r e" x="1717">13.97</text><text class="n y e" x="1827">0</text><path d="M1877 -5h8" stroke="#808080"/></g>
<g transform="translate(0,828)"><text class="n w" x="1535">14:58</text><text class="n r e" x="1717">13.97</text><text class="n y e" x="1827">0</text><path d="M1877 -5h8" stroke="#808080"/></g>
<g transform="translate(0,846)"><text class="n w" x="1535">14:58</text><text class="n r e" x="1717">13.97</text><text class="n y e" x="1827">0</text><path d="M1877 -5h8" stroke="#808080"/></g>
<g transform="translate(0,864)"><text class="n w" x="1535">14:58</text><text class="n r e" x="1717">13.97</text><text class="n y e" x="1827">0</text><path d="M1877 -5h8" stroke="#808080"/></g>
<g transform="translate(0,882)"><text class="n w" x="1535">14:59</text><text class="n r e" x="1717">13.97</text><text class="n y e" x="1827">0</text><path d="M1877 -5h8" stroke="#808080"/></g>
<g transform="translate(0,900)"><text class="n w" x="1535">14:59</text><text class="n r e" x="1717">13.97</text><text class="n y e" x="1827">0</text><path d="M1877 -5h8" stroke="#808080"/></g>
<g transform="translate(0,918)"><text class="n w" x="1535">14:59</text><text class="n r e" x="1717">13.97</text><text class="n y e" x="1827">0</text><path d="M1877 -5h8" stroke="#808080"/></g>
<g transform="translate(0,936)"><text class="n w" x="1535">14:59</text><text class="n r e" x="1717">13.97</text><text class="n y e" x="1827">0</text><path d="M1877 -5h8" stroke="#808080"/></g>
<g transform="translate(0,954)"><text class="n w" x="1535">14:59</text><text class="n r e" x="1717">13.97</text><text class="n y e" x="1827">0</text><path d="M1877 -5h8" stroke="#808080"/></g>
<g transform="translate(0,972)"><text class="n w" x="1535">14:59</text><text class="n r e" x="1717">13.97</text><text class="n y e" x="1827">0</text><path d="M1877 -5h8" stroke="#808080"/></g>
<g transform="translate(0,990)"><text class="n w" x="1535">15:00</text><text class="n r e" x="1717">13.97</text><text class="n m e" x="1825">22220</text><text class="n g e" x="1893">2028</text></g>
</g>

<!-- right tabs -->
<rect x="1534" y="1009" width="361" height="1" fill="#800000"/>
<path d="M1577.500 1009v18M1622.500 1009v18M1667.500 1009v18M1712.500 1009v18M1757.500 1009v18M1802.500 1009v18M1847.500 1009v18" stroke="#800000"/>
<text class="k c" x="1555.500" y="1024" style="fill:#0ff">笔</text><text class="k c" x="1600" y="1024">价</text><text class="k c" x="1645" y="1024">细</text><text class="k c" x="1690" y="1024">势</text><text class="k c" x="1735" y="1024">联</text><text class="k c" x="1780" y="1024">值</text><text class="k c" x="1825" y="1024">主</text><text class="k c" x="1871" y="1024">筹</text>

<!-- status bar -->
<g>
<text x="0" y="1045" font-size="15" fill="#333">上证</text>
<text class="st" x="36" y="1045" fill="#008000">3865.23</text><text class="st" x="98" y="1045" fill="#008000">-24.27</text><text class="st" x="153" y="1045" fill="#008000">-0.62%</text>
<text class="st" x="210" y="1045" fill="#000">12100亿</text>
<text x="275" y="1045" font-size="15" fill="#333">深证</text>
<text class="st" x="311" y="1045" fill="#008000">12895.11-336.36</text><text class="st" x="428" y="1045" fill="#008000">-2.54%</text>
<text class="st" x="486" y="1045" fill="#000">13662亿</text>
<text x="550" y="1045" font-size="15" fill="#333">创业</text>
<text class="st" x="593" y="1045" fill="#f00">17.19</text><text class="st" x="658" y="1045" fill="#f00">0.09</text><text class="st" x="703" y="1045" fill="#f00">0.53%</text>
<text class="st" x="760" y="1045" fill="#000">5.75亿</text>
<path d="M825.500 1029v21M933.500 1029v21" stroke="#999"/>
<text x="829" y="1045" font-size="15" fill="#333">总成交</text><text class="st" x="879" y="1045" fill="#000">25969亿</text>
<text x="939" y="1044" font-size="12" fill="#222">长城深圳移动行情1</text>
</g>
<rect x="1743.500" y="1033.500" width="14" height="10" rx="1" fill="#eef" stroke="#4070b0"/><path d="M1747 1040h8" stroke="#d0a020"/>
<rect x="1763.500" y="1033.500" width="12" height="11" fill="#fff" stroke="#888"/><path d="M1765 1036h9M1765 1038h9M1765 1040h9M1765 1042h9" stroke="#aaa"/>
<circle cx="1787" cy="1039" r="6" fill="#d8c020" stroke="#908000"/>
<path d="M1802 1034l8 2-3 6-5-3zM1805 1042l-3 4h7z" fill="#777"/>
<path d="M1822 1033l4 4h-8z" fill="#f00"/><path d="M1822 1037l4 4h-8z" fill="#ee0"/><path d="M1822 1041l4 4h-8z" fill="#080"/>
<path d="M1835 1035v8" stroke="#777" stroke-width="2"/>
<text x="1843" y="1045" font-size="13.500" fill="#111" letter-spacing=".3">23:59:50</text>

<!-- sidebar icons -->
<g fill="#f4f8ff" stroke="#4a8cff" stroke-width="1.200">
<path d="M1900.500 39.500l7-6v3.500h8v5h-8v3.500z"/>
<path d="M1908 54.500l7 7h-3.500v7h-7v-7H1901z"/>
<path d="M1908 92.500l-7-7h3.500v-7h7v7h3.500z"/>
</g>
<g fill="#fff" stroke="#4a7cd8">
<rect x="1900.500" y="100.500" width="15" height="14"/><rect x="1900.500" y="123.500" width="15" height="14"/><rect x="1900.500" y="146.500" width="15" height="14"/><rect x="1900.500" y="170.500" width="15" height="14"/><rect x="1900.500" y="194.500" width="13" height="11"/><rect x="1900.500" y="216.500" width="15" height="14"/><rect x="1900.500" y="240.500" width="15" height="14"/><rect x="1900.500" y="263.500" width="15" height="14"/><rect x="1900.500" y="286.500" width="15" height="14"/><rect x="1900.500" y="309.500" width="15" height="14"/><rect x="1900.500" y="331.500" width="15" height="14"/><rect x="1900.500" y="362.500" width="15" height="14"/><rect x="1900.500" y="485.500" width="15" height="14"/><rect x="1900.500" y="509.500" width="15" height="14"/>
</g>
<path d="M1902 103h5M1902 106h5M1902 109h5" stroke="#0a0" fill="none"/><path d="M1908 103h6M1908 106h6" stroke="#e00"/><circle cx="1911" cy="110" r="3" fill="#aaa"/>
<path d="M1902 126v9" stroke="#e00" stroke-width="2"/><path d="M1906 126v9" stroke="#0a0" stroke-width="2"/><path d="M1910 126v9" stroke="#00f" stroke-width="2"/><path d="M1914 126v9" stroke="#e00" stroke-width="2"/>
<path d="M1902 157l4-3 3 1 5-5" stroke="#e00" fill="none"/>
<path d="M1903 173v9M1908 171v9M1913 172v9" stroke="#e00" stroke-width="2"/><path d="M1905 175v7" stroke="#080" stroke-width="2"/>
<path d="M1903.500 192.500v-3h12v11h-2" fill="none" stroke="#4a7cd8"/><path d="M1902 197h9M1902 199h9M1902 201h9" stroke="#444"/>
<text x="1902" y="227" font-size="10" font-weight="bold" fill="#0044c0">F10</text>
<path d="M1903 244h4v3h-4zM1909 249h4v2h-4zM1909 245h4v2h-4z" fill="#e0c040" stroke="#c09020"/>
<rect x="1904" y="266" width="9" height="9" fill="#f08020"/>
<text x="1902" y="297" font-size="10" font-weight="bold" fill="#0044c0">F12</text>
<text x="1902" y="320" font-size="11" font-weight="bold" fill="#005060">fx</text>
<circle cx="1908" cy="338" r="4" fill="none" stroke="#0044c0"/>
<rect x="1897" y="353" width="22" height="1" fill="#aaa"/>
<path d="M1902 367l3 2 3-2 3 2 3-2M1902 372l3 2 3-2 3 2 3-2" stroke="#e00" fill="none"/>
<text x="1908" y="396" font-size="10" font-weight="bold" fill="#3050d0" text-anchor="middle">RSI</text>
<text x="1908" y="421" font-size="16" font-weight="bold" fill="#d03030" text-anchor="middle">$</text>
<path d="M1908 431l3 3h-2v3h3v-2l3 3-3 3v-2h-3v3h2l-3 3-3-3h2v-3h-3v2l-3-3 3-3v2h3v-3h-2z" fill="#1050d0"/>
<path d="M1901 468l2-5 9-9 3 3-9 9z" fill="#e8a030" stroke="#805010" stroke-width=".5"/>
<rect x="1897" y="476" width="22" height="1" fill="#aaa"/>
<text x="1902" y="496" font-size="10" font-weight="bold" fill="#0044c0">F5</text>
<path d="M1903 515a6 5 0 0 1 10 0M1913 517a6 5 0 0 1-10 0" stroke="#40a040" fill="none" stroke-width="2"/>
<text class="sb" x="1908" y="543">1</text><text class="sb" x="1908" y="566">5</text><text class="sb" x="1908" y="589">15</text><text class="sb" x="1908" y="612">30</text><text class="sb" x="1908" y="635">60</text>
<rect x="1897" y="642" width="23" height="22" fill="#fafafa"/><path d="M1897.500 664v-21.500H1920" fill="none" stroke="#aaa" stroke-width="1.500"/>
<text class="sb" x="1908.500" y="658">日</text><text class="sb" x="1908" y="681">周</text><text class="sb" x="1908" y="704">月</text><text class="sb" x="1908" y="727">N</text><text class="sb" x="1908" y="750">多</text><text class="sb" x="1908" y="773">季</text><text class="sb" x="1908" y="796">年</text>
</svg>
</body></html>
